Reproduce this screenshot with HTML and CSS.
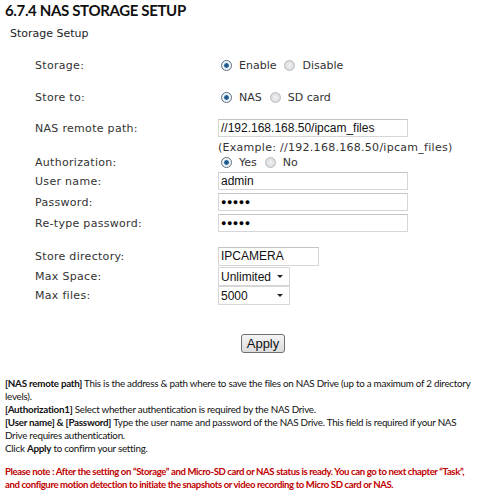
FILE: index.html
```html
<!DOCTYPE html>
<html>
<head>
<meta charset="utf-8">
<link rel="stylesheet" href="styles.css">
</head>
<body>
<h1 class="title">6.7.4 NAS STORAGE SETUP</h1>
<div class="panel-title">Storage Setup</div>
<div class="form">
  <div class="row r-storage">
    <div class="label">Storage:</div>
    <div class="field"><span class="opt"><span class="radio on"></span>Enable</span><span class="opt"><span class="radio"></span>Disable</span></div>
  </div>
  <div class="row r-storeto">
    <div class="label">Store to:</div>
    <div class="field"><span class="opt"><span class="radio on"></span>NAS</span><span class="opt"><span class="radio"></span>SD card</span></div>
  </div>
  <div class="row r-nas">
    <div class="label">NAS remote path:</div>
    <div class="field"><div class="input wide">//192.168.168.50/ipcam_files</div></div>
  </div>
  <div class="row r-example">
    <div class="label"></div>
    <div class="field example">(Example: //192.168.168.50/ipcam_files)</div>
  </div>
  <div class="row r-auth">
    <div class="label">Authorization:</div>
    <div class="field"><span class="opt"><span class="radio on"></span>Yes</span><span class="opt"><span class="radio"></span>No</span></div>
  </div>
  <div class="row r-user">
    <div class="label">User name:</div>
    <div class="field"><div class="input wide">admin</div></div>
  </div>
  <div class="row r-pwd">
    <div class="label">Password:</div>
    <div class="field"><div class="input wide dots">●●●●●</div></div>
  </div>
  <div class="row r-pwd">
    <div class="label">Re-type password:</div>
    <div class="field"><div class="input wide dots">●●●●●</div></div>
  </div>
  <div class="row r-dir">
    <div class="label">Store directory:</div>
    <div class="field"><div class="input short">IPCAMERA</div></div>
  </div>
  <div class="row r-space">
    <div class="label">Max Space:</div>
    <div class="field"><div class="select"><span>Unlimited</span><span class="caret"></span></div></div>
  </div>
  <div class="row r-files">
    <div class="label">Max files:</div>
    <div class="field"><div class="select"><span>5000</span><span class="caret"></span></div></div>
  </div>
  <div class="row r-apply">
    <button class="btn">Apply</button>
  </div>
</div>
<div class="notes">
  <p><b>[NAS remote path]</b> This is the address &amp; path where to save the files on NAS Drive (up to a maximum of 2 directory<br>levels).</p>
  <p><b>[Authorization1]</b> Select whether authentication is required by the NAS Drive.</p>
  <p><b>[User name] &amp; [Password]</b> Type the user name and password of the NAS Drive. This field is required if your NAS<br>Drive requires authentication.</p>
  <p>Click <b>Apply</b> to confirm your setting.</p>
  <p class="warn">Please note : After the setting on “Storage” and Micro-SD card or NAS status is ready. You can go to next chapter “Task”,<br>and configure motion detection to initiate the snapshots or video recording to Micro SD card or NAS.</p>
</div>
</body>
</html>
```
FILE: styles.css
```css
html, body { margin: 0; padding: 0; background: #fff; }
body { width: 482px; height: 500px; overflow: hidden; color: #000; }

.title {
  margin: 0;
  padding-left: 5px;
  font-family: Lato, "Liberation Sans", sans-serif;
  font-weight: 700;
  font-size: 15px;
  letter-spacing: -0.35px;
  line-height: 20px;
  color: #111;
}

.panel-title {
  margin-top: 6px;
  padding-left: 10px;
  font-family: "DejaVu Sans", Verdana, sans-serif;
  font-size: 11px;
  line-height: 16px;
  color: #222;
}

.form {
  padding-left: 35px;
  font-family: "DejaVu Sans", Verdana, sans-serif;
  font-size: 11px;
  letter-spacing: 0.3px;
  color: #333;
}

.row { display: flex; align-items: center; height: 20px; }
.label { width: 183px; flex: none; }
.field { display: flex; align-items: center; letter-spacing: 0; }

.r-storage { margin-top: 13px; }
.r-storeto { margin-top: 12px; }
.r-nas { margin-top: 11px; }
.r-example { margin-top: 1px; height: 16px; }
.r-auth { height: 14px; }
.r-user { margin-top: 2px; }
.r-pwd { margin-top: 1px; }
.r-dir { margin-top: 14px; height: 19px; }
.r-space { margin-top: 1px; height: 19px; }
.r-files { height: 19px; }
.r-apply { margin-top: 29px; height: 19px; padding-left: 206px; }

.opt { display: flex; align-items: center; margin-right: 5px; }
.radio {
  width: 9px; height: 9px;
  border-radius: 50%;
  border: 1px solid #b4bcc4;
  background: radial-gradient(circle at 50% 50%, #f2f2f2 0, #dcdcdc 70%);
  margin: 0 7px 0 3px;
  flex: none;
}
.radio.on {
  border-color: #5b6f83;
  background: radial-gradient(circle at 50% 50%, #17456e 0, #2e6da4 2px, #bcd3e6 2.6px, #ffffff 3.4px, #e8eef3 4.5px);
}

.field.example { color: #333; letter-spacing: 0.28px; }

.input {
  box-sizing: border-box;
  height: 18px;
  border: 1px solid #d6d6d6;
  border-top-color: #c4c4c4;
  background: #fff;
  font-family: "Liberation Sans", Arial, sans-serif;
  font-size: 12px;
  line-height: 16px;
  padding-left: 2px;
  color: #111;
  white-space: nowrap;
}
.input.wide { width: 190px; }
.input.short { width: 101px; height: 19px; line-height: 17px; }
.input.dots { font-size: 9px; letter-spacing: 0.5px; color: #000; }

.select {
  box-sizing: border-box;
  width: 72px; height: 19px;
  border: 1px solid #d6d6d6;
  background: #fff;
  display: flex; align-items: center; justify-content: space-between;
  padding: 0 6px 0 2px;
  font-family: "Liberation Sans", Arial, sans-serif;
  font-size: 12px;
  color: #111;
}
.caret {
  width: 0; height: 0;
  border-left: 3px solid transparent;
  border-right: 3px solid transparent;
  border-top: 3px solid #222;
}

.btn {
  box-sizing: border-box;
  width: 44px; height: 19px;
  padding: 0;
  border: 1px solid #707070;
  border-radius: 3px;
  background: linear-gradient(#f4f4f4, #dcdcdc);
  font-family: "Liberation Sans", Arial, sans-serif;
  font-size: 13px;
  line-height: 17px;
  color: #111;
}

.notes {
  margin-top: 24px;
  padding-left: 5px;
  font-family: Lato, "Liberation Sans", sans-serif;
  font-size: 9.8px;
  letter-spacing: -0.25px;
  line-height: 13px;
  color: #111;
  white-space: nowrap;
}
.notes p { margin: 0; }
.notes .warn { margin-top: 10px; color: #c00000; font-weight: 700; font-size: 9.6px; letter-spacing: -0.4px; }
```
